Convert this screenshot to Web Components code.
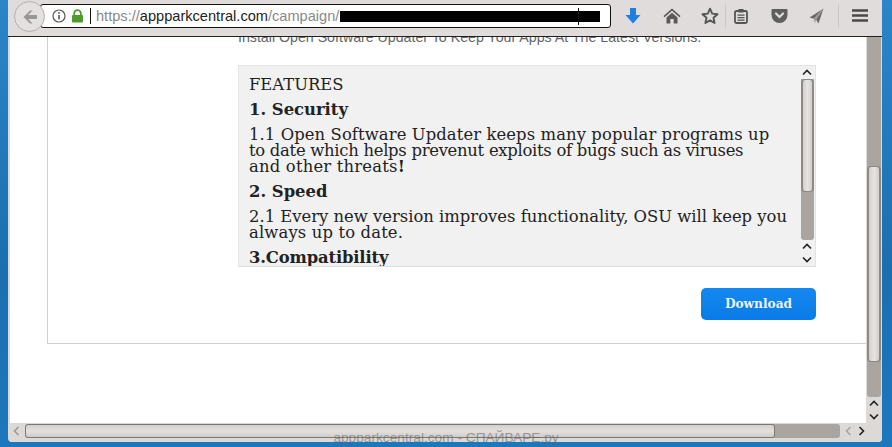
<!DOCTYPE html>
<html><head><meta charset="utf-8">
<style>
html,body{margin:0;padding:0;height:100%;overflow:hidden;background:#1c74b6}
browser-window{width:892px;height:447px}
</style></head><body>
<template id="t-window"><style>
:host{display:flex;position:relative;overflow:hidden;box-sizing:border-box;padding:0 10px 5px 8px;background:linear-gradient(180deg,#2a86c8,#1b6fb0 60%,#1c78bc)}
.frame{flex:1;min-width:0;display:flex;flex-direction:column;background:#dcd9d7;padding-left:2px;border-radius:0 0 4px 4px;overflow:hidden}
.mid{flex:1;min-height:0;display:flex}
.wm{position:absolute;left:0;right:0;top:428px;text-align:center;font:13.700px/20px "Liberation Sans",sans-serif;color:rgba(90,90,90,.55)}
</style><div class="frame"><nav-bar></nav-bar><div class="mid"><slot></slot><v-scroll size="page"></v-scroll></div><h-scroll></h-scroll></div><div class="wm">appparkcentral.com - СПАЙВАРЕ.ру</div></template>

<template id="t-nav"><style>
:host{display:flex;position:relative;align-items:center;box-sizing:border-box;height:37px;flex:none;margin-left:-2px;padding:0 0 5px 32px;background:#dfdcdb;border-bottom:1px solid #222}
.url{width:571px;box-sizing:border-box;height:24px;flex:none;background:#fff;border:1px solid #111;border-radius:3px;display:flex;align-items:center;padding-left:11px;font:14.600px/20px "Liberation Sans",sans-serif;color:#8a8a8a;white-space:nowrap;overflow:hidden;position:relative}
.url b{font-weight:400;color:#222}
.caret{width:1px;height:16px;background:#111;margin:0 5px 0 6px;flex:none}
.redact{display:inline-block;position:absolute;left:299px;top:6px;width:260px;height:11px;background:#000}
.redact2{position:absolute;left:537px;top:3px;width:1px;height:17px;background:#111}
.back{position:absolute;z-index:2;left:6px;top:1px;width:31px;height:31px;box-sizing:border-box;border-radius:50%;border:1px solid #b3b0ae;background:#e3e0df;display:flex;align-items:center;justify-content:center}
.tools{display:flex;align-items:center;flex:none;height:24px;padding-left:14px}
.tools svg{display:block;flex:none}
.sep{width:1px;height:24px;background:#cac7c5;flex:none}
</style>
<div class="back"><svg width="16" height="16" viewBox="0 0 16 16"><path d="M8 1.500 1.500 8 8 14.500h2.600L6.200 10H15V6H6.200l4.400-4.500z" fill="#9a9897"/></svg></div>
<div class="url"><svg width="14" height="14" viewBox="0 0 14 14" style="flex:none"><circle cx="7" cy="7" r="6" fill="none" stroke="#555" stroke-width="1.200"/><rect x="6.200" y="6" width="1.600" height="4.400" fill="#555"/><rect x="6.200" y="3.200" width="1.600" height="1.600" fill="#555"/></svg><svg width="13" height="14" viewBox="0 0 13 14" style="flex:none;margin-left:5px"><path d="M3.200 6V4.400a3.300 3.300 0 0 1 6.600 0V6" fill="none" stroke="#4f9a2c" stroke-width="1.800"/><rect x="1" y="6" width="11" height="7.500" rx="1" fill="#4f9a2c"/></svg><span class="caret"></span><span>https://<b>appparkcentral.com</b>/campaign/</span><span class="redact"></span><span class="redact2"></span></div>
<div class="tools">
<svg width="16" height="18" viewBox="0 0 16 18"><path d="M5 1h6v7h4.500L8 16.500.5 8H5z" fill="#1e7fe0"/></svg>
<svg width="18" height="16" viewBox="0 0 18 16" style="margin-left:22px"><path d="M9 .5.500 8l1 1.200L9 2.800l7.500 6.400 1-1.200z" fill="#5c5a59"/><path d="M3.500 9.500 9 4.800l5.500 4.700V15.500h-3.800v-4.500H7.300v4.500H3.500z" fill="#5c5a59"/></svg>
<svg width="18" height="18" viewBox="0 0 18 18" style="margin-left:20px"><path d="M9 1.700 11.200 6.600l5.300.6-4 3.600 1.100 5.200L9 13.400 4.400 16l1.100-5.200-4-3.600 5.300-.6z" fill="none" stroke="#555" stroke-width="1.900" stroke-linejoin="round"/></svg>
<span class="sep" style="margin-left:6px"></span>
<svg width="14" height="16" viewBox="0 0 14 16" style="margin-left:8px"><rect x="1" y="3" width="12" height="12" rx="1.500" fill="none" stroke="#555" stroke-width="1.800"/><rect x="4.500" y="1" width="5" height="3.500" fill="#555"/><path d="M3.500 7.200h7M3.500 9.700h7M3.500 12.200h7" stroke="#555" stroke-width="1.300"/></svg>
<svg width="17" height="15" viewBox="0 0 17 15" style="margin-left:23px"><path d="M1.500 1h14A1 1 0 0 1 16.500 2v5a8 8 0 0 1-16 0V2a1 1 0 0 1 1-1z" fill="#605e5d"/><path d="M5 5.500 8.500 9 12 5.500" fill="none" stroke="#dfdcdb" stroke-width="2.200" stroke-linecap="round"/></svg>
<svg width="15" height="16" viewBox="0 0 15 16" style="margin-left:21px"><path d="M14.500.5 .5 9.500l4.300 1.300 0 0L14.500.5 7 11.500l2.500 4z" fill="#6b6968"/><path d="M14.500.5 4.800 10.800 6 15.500l1-4z" fill="#9b9997"/></svg>
<span class="sep" style="margin-left:14px"></span>
<svg width="16" height="13" viewBox="0 0 16 13" style="margin-left:13px"><path d="M0 1.500h16M0 6.500h16M0 11.500h16" stroke="#4b4948" stroke-width="2.600"/></svg>
</div></template>

<template id="t-vs"><style>
:host{display:flex;flex-direction:column;align-items:center;flex:none;box-sizing:border-box}
:host([size=page]){width:16px;background:#dcd9d7}
:host([size=box]){width:14px;margin-right:1px}
.up,.down{flex:none;display:flex;align-items:center;justify-content:center;height:13px}
.rail{flex:1;min-height:0;width:14px;display:flex;flex-direction:column;background:#aba5a2;border-radius:0 0 3px 3px}
:host([size=box]) .rail{width:13px}
.thumb{box-sizing:border-box;border:solid #8d8985;border-width:1px 2px;border-radius:4px;background:linear-gradient(90deg,#d2cfcc,#e6e3e1 50%,#d2cfcc);flex:none}
:host([size=page]) .thumb{height:196px;margin-top:129px;width:14px}
:host([size=box]) .thumb{height:113px}
:host([size=page]) .up.top{display:none}
svg{display:block}
</style>
<div class="up top"><svg width="10" height="7" viewBox="0 0 10 7"><path d="M1 5.500 5 1.500l4 4" fill="none" stroke="#222" stroke-width="1.600"/></svg></div>
<div class="rail"><div class="thumb"></div></div>
<div class="up"><svg width="10" height="7" viewBox="0 0 10 7"><path d="M1 5.500 5 1.500l4 4" fill="none" stroke="#222" stroke-width="1.600"/></svg></div>
<div class="down"><svg width="10" height="7" viewBox="0 0 10 7"><path d="M1 1.500 5 5.500l4-4" fill="none" stroke="#222" stroke-width="1.600"/></svg></div></template>

<template id="t-hs"><style>
:host{display:flex;align-items:stretch;flex:none;height:19px;background:#dcd9d7;padding:1px 14px 4px 0;box-sizing:border-box}
.l,.r{flex:none;width:13px;display:flex;align-items:center;justify-content:center}
.track{flex:1;margin-left:2px;height:14px;box-sizing:border-box;border-radius:3px;background:#aba5a2;display:flex}
.thumb{width:750px;box-sizing:border-box;border:1.500px solid #7c7874;border-radius:3px;background:linear-gradient(180deg,#d2cfcc,#e3e0de 50%,#cfccc9)}
svg{display:block}
</style>
<div class="l"><svg width="7" height="10" viewBox="0 0 7 10"><path d="M5.500 1 1.500 5l4 4" fill="none" stroke="#9a9794" stroke-width="1.500"/></svg></div>
<div class="track"><div class="thumb"></div></div>
<div class="l" style="margin-left:2px"><svg width="7" height="10" viewBox="0 0 7 10"><path d="M5.500 1 1.500 5l4 4" fill="none" stroke="#a5a29f" stroke-width="1.500"/></svg></div>
<div class="r"><svg width="7" height="10" viewBox="0 0 7 10"><path d="M1.500 1 5.500 5l-4 4" fill="none" stroke="#222" stroke-width="1.600"/></svg></div></template>

<template id="t-page"><style>
:host{display:block;flex:1;min-width:0;background:#fff;overflow:hidden}
.card{box-sizing:border-box;height:307px;margin-left:37px;border:solid #cfcfcf;border-width:0 0 1px 1px;padding:0 50px 0 190px;display:flex;flex-direction:column}
.intro{margin:-9px 0 0;font:14.200px/18px "Liberation Sans",sans-serif;color:#666;white-space:nowrap;height:18px;flex:none}
.foot{display:flex;justify-content:flex-end;margin-top:21px}
</style><div class="card"><p class="intro"><slot name="intro"></slot></p><slot></slot><div class="foot"><slot name="action"></slot></div></div></template>

<template id="t-box"><style>
:host{display:flex;flex:none;height:202px;margin-top:19px;box-sizing:border-box;background:#f1f1f1;border:1px solid #e3e3e3;border-bottom-color:#ddd;overflow:hidden}
.text{flex:1;min-width:0;overflow:hidden;padding:11px 0 0 10px;font:16.400px/16px "DejaVu Serif",serif;color:#222;white-space:nowrap}
</style><div class="text"><slot></slot></div><v-scroll size="box"></v-scroll></template>

<template id="t-h"><style>
:host{display:block;font:700 16.400px/16px "DejaVu Serif",serif;color:#222;margin:9px 0 9px}
</style><slot></slot></template>

<template id="t-btn"><style>
:host{display:flex;align-items:center;justify-content:center;width:115px;height:32px;border-radius:5px;background:linear-gradient(180deg,#1488f0,#0a7be6);color:#eaf4ff;font:700 12.200px/16px "DejaVu Serif",serif}
</style><slot></slot></template>

<browser-window>
<page-view>
<span slot="intro">Install Open Software Updater To Keep Your Apps At The Latest Versions.</span>
<feature-box>
FEATURES
<feature-heading>1. Security</feature-heading>
<span style="letter-spacing:.1px">1.1 Open Software Updater keeps many popular programs up</span><br><span style="letter-spacing:-.27px">to date which helps prevenut exploits of bugs such as viruses</span><br><span style="letter-spacing:.2px">and other threats<b>!</b></span>
<feature-heading>2. Speed</feature-heading>
2.1 Every new version improves functionality, OSU will keep you<br><span style="letter-spacing:.15px">always up to date.</span>
<feature-heading style="letter-spacing:-.15px">3.Compatibility</feature-heading>
</feature-box>
<download-button slot="action">Download</download-button>
</page-view>
</browser-window>

<script>
const defs={'browser-window':'t-window','nav-bar':'t-nav','v-scroll':'t-vs','h-scroll':'t-hs','page-view':'t-page','feature-box':'t-box','feature-heading':'t-h','download-button':'t-btn'};
for(const [name,id] of Object.entries(defs)){
  customElements.define(name,class extends HTMLElement{
    constructor(){super();this.attachShadow({mode:'open'}).appendChild(document.getElementById(id).content.cloneNode(true));}
  });
}
</script>
</body></html>
